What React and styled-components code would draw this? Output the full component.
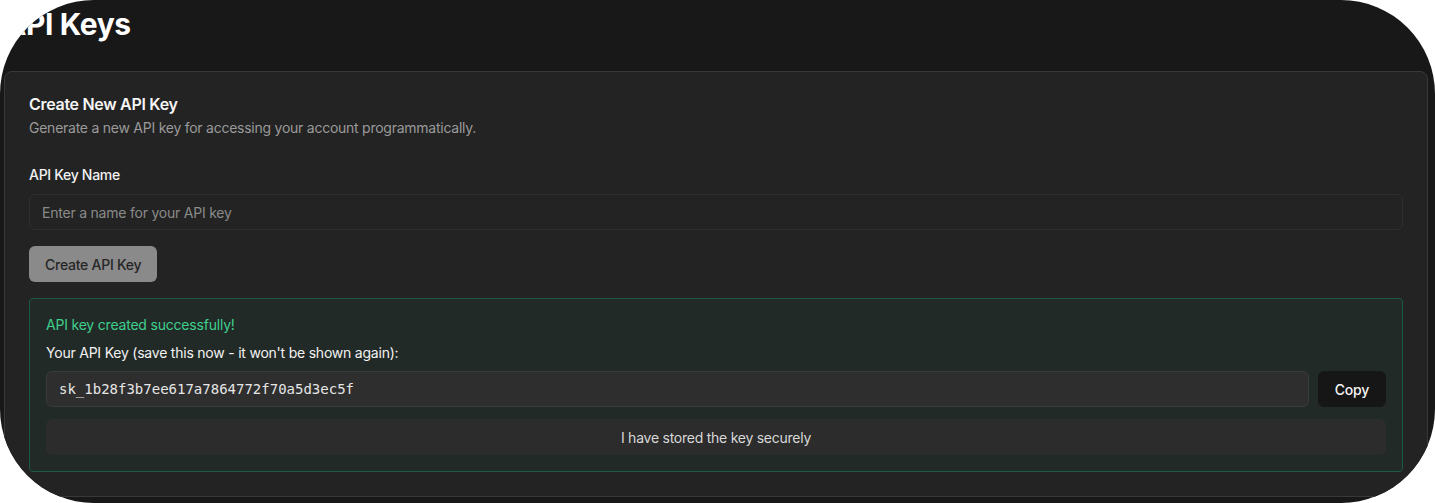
import React from "react";
import styled, { createGlobalStyle } from "styled-components";

const Global = createGlobalStyle`
  html, body { margin: 0; padding: 0; background: #ffffff; }
  body { font-family: Inter, "Noto Sans", sans-serif; -webkit-font-smoothing: antialiased; }
  * { box-sizing: border-box; }
`;

const Frame = styled.div`
  width: 1435px;
  height: 503px;
  border-radius: 94px;
  overflow: hidden;
  background: #181818;
  padding: 6px 7px 0 4px;
  display: flex;
  flex-direction: column;
`;

const PageTitle = styled.h1`
  margin: 0 0 29px 0;
  font-size: 30px;
  line-height: 36px;
  font-weight: 700;
  color: #ffffff;
  letter-spacing: -0.4px;
`;

const Card = styled.section`
  background: #232323;
  border: 1px solid #383838;
  border-radius: 8px;
  padding: 24px;
  display: flex;
  flex-direction: column;
`;

const CardTitle = styled.h2`
  margin: 0;
  font-size: 16px;
  line-height: 16px;
  font-weight: 600;
  color: #f5f5f5;
  letter-spacing: -0.3px;
`;

const CardDescription = styled.p`
  margin: 6px 0 0 0;
  font-size: 14px;
  line-height: 20px;
  color: #9a9a9a;
  letter-spacing: -0.25px;
`;

const Label = styled.label`
  margin-top: 27px;
  font-size: 14px;
  line-height: 20px;
  font-weight: 500;
  color: #f2f2f2;
  letter-spacing: -0.3px;
`;

const TextInput = styled.input`
  margin-top: 9px;
  height: 36px;
  width: 100%;
  padding: 0 12px;
  background: #232323;
  border: 1px solid #2f2f2f;
  border-radius: 6px;
  font-family: Inter, sans-serif;
  font-size: 14px;
  letter-spacing: -0.22px;
  color: #eee;
  outline: none;
  &::placeholder { color: #8a8a8a; }
`;

const Button = styled.button`
  height: 36px;
  padding: 0 ${(p) => p.$px || 16}px;
  border: none;
  border-radius: 6px;
  font-family: Inter, sans-serif;
  font-size: 14px;
  font-weight: 500;
  letter-spacing: -0.25px;
  cursor: pointer;
  background: ${(p) => p.$bg};
  color: ${(p) => p.$fg};
`;

const CreateButton = styled(Button)`
  margin-top: 16px;
  align-self: flex-start;
`;

const SuccessBox = styled.div`
  margin-top: 16px;
  background: #222a27;
  border: 1px solid #1e5a42;
  border-radius: 4px;
  padding: 16px;
  display: flex;
  flex-direction: column;
`;

const SuccessText = styled.p`
  margin: 0;
  font-size: 14px;
  line-height: 20px;
  font-weight: 400;
  letter-spacing: -0.2px;
  color: #3fcf8e;
`;

const KeyLabel = styled.p`
  margin: 8px 0 0 0;
  font-size: 14px;
  line-height: 20px;
  font-weight: 400;
  letter-spacing: -0.22px;
  color: #f2f2f2;
`;

const KeyRow = styled.div`
  margin-top: 8px;
  display: flex;
  gap: 9px;
`;

const KeyField = styled.div`
  flex: 1;
  height: 36px;
  display: flex;
  align-items: center;
  padding: 0 12px;
  background: #2e2e2e;
  border: 1px solid #3b3b3b;
  border-radius: 6px;
  font-family: "DejaVu Sans Mono", "Liberation Mono", monospace;
  font-size: 14px;
  color: #e6e6e6;
`;

const StoredButton = styled(Button)`
  margin-top: 12px;
  width: 100%;
  font-weight: 400;
`;

export default function App() {
  return (
    <>
      <Global />
      <Frame>
        <PageTitle>API Keys</PageTitle>
        <Card>
          <CardTitle>Create New API Key</CardTitle>
          <CardDescription>
            Generate a new API key for accessing your account programmatically.
          </CardDescription>
          <Label htmlFor="keyname">API Key Name</Label>
          <TextInput id="keyname" placeholder="Enter a name for your API key" />
          <CreateButton $bg="#8a8a8a" $fg="#262626">Create API Key</CreateButton>
          <SuccessBox>
            <SuccessText>API key created successfully!</SuccessText>
            <KeyLabel>Your API Key (save this now - it won't be shown again):</KeyLabel>
            <KeyRow>
              <KeyField>sk_1b28f3b7ee617a7864772f70a5d3ec5f</KeyField>
              <Button $bg="#161616" $fg="#f5f5f5" $px={17}>Copy</Button>
            </KeyRow>
            <StoredButton $bg="#2c2c2c" $fg="#d8d8d8">I have stored the key securely</StoredButton>
          </SuccessBox>
        </Card>
      </Frame>
    </>
  );
}
